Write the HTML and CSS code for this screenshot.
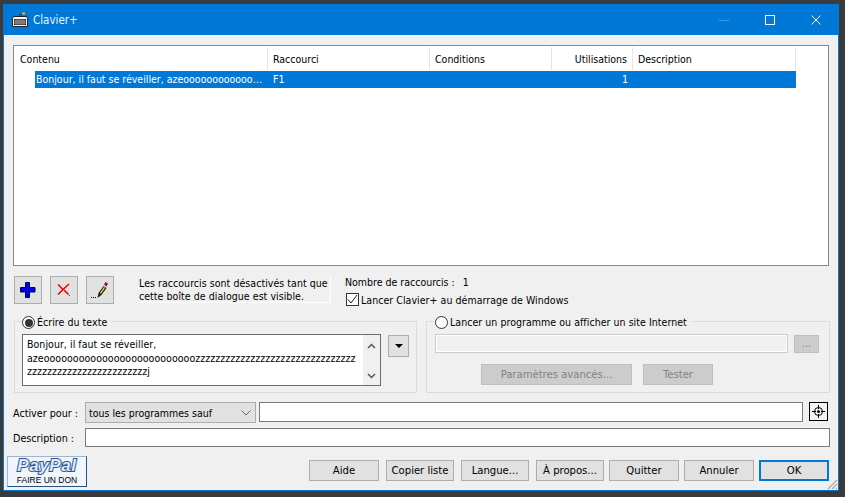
FILE: index.html
```html
<!DOCTYPE html>
<html lang="fr">
<head>
<meta charset="utf-8">
<title>Clavier+</title>
<link rel="stylesheet" href="styles.css">
</head>
<body>
<div class="window">
  <header class="titlebar">
    <svg class="app-icon" width="16" height="16" viewBox="0 0 16 16">
      <path d="M7.500 4V2.500h3" fill="none" stroke="#222" stroke-width="1" stroke-dasharray="1 .6"/>
      <rect x="10" y="0.500" width="3" height="2" fill="#e8b820"/>
      <path d="M1.500 4.500h13l1 2v8h-15v-8z" fill="#f4f4f4" stroke="#222" stroke-width="1"/>
      <rect x="2" y="7" width="12" height="6" fill="#111"/>
      <path d="M2 9h12M2 11h12M4 7v6M6 7v6M8 7v6M10 7v6M12 7v6" stroke="#e8e8e8" stroke-width=".6"/>
    </svg>
    <span class="title">Clavier+</span>
    <div class="caption">
      <span class="cap-btn"><svg width="10" height="10"><path d="M0 5.500h10" stroke="#3f9be6"/></svg></span>
      <span class="cap-btn"><svg width="10" height="10"><rect x=".5" y=".5" width="9" height="9" fill="none" stroke="#fff"/></svg></span>
      <span class="cap-btn"><svg width="10" height="10"><path d="M.5.500l9 9M9.500.500l-9 9" stroke="#fff"/></svg></span>
    </div>
  </header>

  <main class="content">
    <section class="listview">
      <div class="list-head">
        <div class="col c1 first-col">Contenu</div>
        <div class="col c2">Raccourci</div>
        <div class="col c3">Conditions</div>
        <div class="col c4 num">Utilisations</div>
        <div class="col c5">Description</div>
      </div>
      <div class="list-row">
        <div class="cell c1s">Bonjour, il faut se réveiller, azeoooooooooooo…</div>
        <div class="cell c2">F1</div>
        <div class="cell c3"></div>
        <div class="cell c4 num">1</div>
        <div class="cell c5"></div>
      </div>
    </section>

    <section class="tools">
      <button class="tool"><svg width="16" height="16" viewBox="0 0 16 16"><path d="M5.500.500h4v5h5.500v4.500H9.500v5.500h-4V10H.500V5.500h5z" fill="#0000e8" stroke="#000050"/></svg></button>
      <button class="tool"><svg width="14" height="14" viewBox="0 0 14 14"><path d="M1 1.500l5 5 6-5.500M6 6.500L1 11.500M7 7l4.500 4.500" fill="none" stroke="#f00000" stroke-width="1.600"/><rect x="12" y="12" width="1" height="1" fill="#f00000"/></svg></button>
      <button class="tool"><svg width="20" height="20" viewBox="0 0 20 20"><path d="M1 17.500h1M3 17.500h1M5 17.500h1" stroke="#000"/><path d="M7.500 18l1-5 5-7 3 2-5 7z" fill="#222"/><path d="M10 13l4-6 1 .8-4 6z" fill="#ffe820"/><path d="M14 4.500l1.500-2.500 2.500 1.500-1.500 3z" fill="#8a1c20"/></svg></button>
      <div class="notice">Les raccourcis sont désactivés tant que<br>cette boîte de dialogue est visible.</div>
      <div class="stats">
        <div class="count"><span>Nombre de raccourcis :</span><span class="count-value">1</span></div>
        <label class="check"><span class="checkbox"><svg width="11" height="11" viewBox="0 0 11 11"><path d="M1 5.500l3 3.500 6-8" fill="none" stroke="#222" stroke-width="1"/></svg></span>Lancer Clavier+ au démarrage de Windows</label>
      </div>
    </section>

    <section class="groups">
      <fieldset class="group left">
        <legend><span class="radio on"></span>Écrire du texte</legend>
        <div class="text-row">
          <div class="textarea">
            <div class="text-body">Bonjour, il faut se réveiller,<br>azeoooooooooooooooooooooooooozzzzzzzzzzzzzzzzzzzzzzzzzzzzzzzz<br>zzzzzzzzzzzzzzzzzzzzzzzzj</div>
            <div class="scroll">
              <svg width="9" height="6" viewBox="0 0 9 6"><path d="M1 5l3.500-3.500L8 5" fill="none" stroke="#555" stroke-width="1.500"/></svg>
              <svg width="9" height="6" viewBox="0 0 9 6"><path d="M1 1l3.500 3.500L8 1" fill="none" stroke="#555" stroke-width="1.500"/></svg>
            </div>
          </div>
          <button class="drop"><svg width="8" height="4" viewBox="0 0 8 4"><path d="M0 0h8L4 4z" fill="#000"/></svg></button>
        </div>
      </fieldset>
      <fieldset class="group right">
        <legend><span class="radio"></span>Lancer un programme ou afficher un site Internet</legend>
        <div class="prog-row">
          <div class="input disabled"></div>
          <button class="btn-off dots">...</button>
        </div>
        <div class="prog-actions">
          <button class="btn-off adv">Paramètres avancés...</button>
          <button class="btn-off test">Tester</button>
        </div>
      </fieldset>
    </section>

    <section class="form-row first">
      <label class="form-label">Activer pour :</label>
      <div class="select"><span>tous les programmes sauf</span><svg width="10" height="6" viewBox="0 0 10 6"><path d="M.5.500L5 5 9.500.500" fill="none" stroke="#666"/></svg></div>
      <div class="input grow"></div>
      <button class="target"><svg width="15" height="15" viewBox="0 0 15 15"><circle cx="7.500" cy="7.500" r="4" fill="none" stroke="#000"/><circle cx="7.500" cy="7.500" r="1.500" fill="#000"/><path d="M7.500 1v4M7.500 10v4M1 7.500h4M10 7.500h4" stroke="#000"/></svg></button>
    </section>
    <section class="form-row second">
      <label class="form-label">Description :</label>
      <div class="input grow"></div>
    </section>

    <footer class="footer">
      <button class="paypal"><span class="pp-logo">PayPal</span><span class="pp-text">FAIRE UN DON</span></button>
      <div class="actions">
        <button class="btn w70">Aide</button>
        <button class="btn w68">Copier liste</button>
        <button class="btn w68">Langue...</button>
        <button class="btn w68">À propos...</button>
        <button class="btn w70 tight">Quitter</button>
        <button class="btn w70 tight">Annuler</button>
        <button class="btn w70 tight default">OK</button>
      </div>
    </footer>
  </main>
  <svg class="grip" width="12" height="12" viewBox="0 0 12 12"><path d="M11 2L2 11M11 6L6 11M11 10L10 11" stroke="#a8a8a8" stroke-width="1.200"/></svg>
</div>
</body>
</html>
```

FILE: styles.css
```css
* { box-sizing: border-box; }
html, body { margin: 0; height: 100%; }
body {
  background: #3b3b3b;
  font-family: "DejaVu Sans", sans-serif;
  font-stretch: condensed;
  font-size: 10.5px;
  color: #000;
  overflow: hidden;
}
button { font: inherit; font-size: 11.2px; font-stretch: condensed; color: inherit; padding: 0; margin: 0; }

.window {
  position: relative;
  width: 836px;
  height: 487px;
  margin: 4px 0 0 3px;
  background: #f0f0f0;
  border: 1px solid #0078d7;
  border-top: 0;
  display: flex;
  flex-direction: column;
}

.titlebar {
  height: 31px;
  flex: none;
  background: #0078d7;
  display: flex;
  align-items: center;
  padding-left: 8px;
  color: #fff;
}
.app-icon { margin-right: 5px; }
.title { font-size: 11.5px; color: #e8f3fb; }
.caption { margin-left: auto; margin-right: -1px; display: flex; }
.cap-btn { width: 46px; display: flex; justify-content: center; align-items: center; height: 31px; }

.content { padding: 10px 8px 0 9px; flex: 1; display: flex; flex-direction: column; }

.listview {
  height: 221px;
  width: 816px;
  background: #fff;
  border: 1px solid #828790;
  flex: none;
}
.list-head { display: flex; height: 25px; }
.col {
  border-right: 1px solid #e5e5e5;
  padding: 6px 5px 0 5px;
  margin-top: 1px;
  height: 23px;
}
.first-col { padding-left: 6px; }
.list-row { display: flex; height: 17px; line-height: 17px; }
.cell { padding: 0 5px 0 5px; background: #0078d7; color: #fff; white-space: nowrap; overflow: hidden; }
.c1 { width: 254px; }
.c1s { width: 233px; margin-left: 21px; padding-left: 1px; padding-right: 0; text-overflow: ellipsis; }
.c2 { width: 162px; }
.c3 { width: 122px; }
.c4 { width: 81px; }
.c5 { width: 163px; }
.num { text-align: right; }

.tools { display: flex; height: 28px; margin-top: 10px; padding-left: 1px; flex: none; }
.tool {
  width: 28px;
  height: 28px;
  margin-right: 8px;
  background: #e1e1e1;
  border: 1px solid #adadad;
  display: flex;
  align-items: center;
  justify-content: center;
}
.notice {
  width: 193px;
  height: 28px;
  margin-left: 16px;
  margin-top: -1px;
  padding-top: 1px;
  border: 1px solid #fff;
  border-left-color: #f0f0f0;
  border-top-color: #f0f0f0;
  line-height: 13px;
  letter-spacing: .05px;
  white-space: nowrap;
}
.stats { margin-left: 14px; margin-top: -1px; }
.count { display: flex; height: 15px; line-height: 15px; }
.count-value { margin-left: 8px; }
.check { display: flex; align-items: center; height: 15px; margin-top: 2px; margin-left: 1px; letter-spacing: .05px; }
.checkbox {
  width: 13px;
  height: 13px;
  border: 1px solid #333;
  background: #fff;
  margin-right: 2px;
  display: flex;
  align-items: center;
  justify-content: center;
}

.groups { display: flex; gap: 9px; margin-top: 11px; padding-left: 1px; height: 78px; flex: none; }
.group {
  margin: 0;
  min-width: 0;
  height: 78px;
  border: 1px solid #dcdcdc;
  padding: 0 0 0 7px;
}
.group.left { width: 403px; }
.group.right { width: 404px; padding-left: 8px; }
legend {
  padding: 0 5px 0 0;
  display: flex;
  align-items: center;
  height: 13px;
  line-height: 13px;
  position: relative;
  top: 1px;
  letter-spacing: .05px;
}
.radio {
  width: 13px;
  height: 13px;
  border: 1px solid #333;
  border-radius: 50%;
  background: #fff;
  margin-right: 2px;
  display: inline-flex;
  align-items: center;
  justify-content: center;
  flex: none;
}
.radio.on::after { content: ""; width: 8px; height: 8px; border-radius: 50%; background: #333; }

.text-row { display: flex; margin-top: 6px; }
.textarea {
  width: 359px;
  height: 52px;
  background: #fff;
  border: 1px solid #6e6e6e;
  display: flex;
}
.text-body { flex: 1; padding: 3px 0 0 4px; line-height: 13.5px; letter-spacing: .05px; white-space: nowrap; overflow: hidden; }
.scroll {
  width: 17px;
  background: #f0f0f0;
  display: flex;
  flex-direction: column;
  justify-content: space-between;
  align-items: center;
  padding: 8px 0 6px;
  flex: none;
}
.drop {
  width: 21px;
  height: 22px;
  margin: 1px 0 0 7px;
  background: #e1e1e1;
  border: 1px solid #adadad;
  display: flex;
  align-items: center;
  justify-content: center;
}

.prog-row { display: flex; margin-top: 6px; }
.input { background: #fff; border: 1px solid #7a7a7a; height: 20px; }
.input.disabled { width: 353px; height: 19px; background: #f0f0f0; border: 1px solid #ccc; box-shadow: inset 0 0 0 1px #fff; flex: none; }
.btn-off {
  background: #ccc;
  border: 1px solid #bfbfbf;
  color: #838383;
  height: 21px;
}
.dots { width: 25px; height: 18px; margin: 1px 0 0 6px; line-height: 12px; }
.prog-actions { display: flex; margin-top: 11px; padding-left: 46px; gap: 11px; }
.adv { width: 151px; }
.test { width: 70px; }

.form-row { display: flex; align-items: flex-start; flex: none; }
.form-row.first { margin-top: 9px; height: 21px; }
.form-row.second { margin-top: 5px; height: 19px; }
.form-label { width: 72px; flex: none; line-height: 23px; font-size: 10.7px; }
.second .form-label { line-height: 21px; }
.second .input { height: 19px; }
.select {
  width: 171px;
  height: 21px;
  background: #e1e1e1;
  border: 1px solid #adadad;
  display: flex;
  align-items: center;
  justify-content: space-between;
  padding: 0 4px 0 3px;
  flex: none;
}
.grow { flex: 1; }
.first .grow { margin-left: 3px; }
.target {
  width: 19px;
  height: 19px;
  margin: 0 2px 0 6px;
  background: #f4f4f4;
  border: 1px solid #000;
  display: flex;
  align-items: center;
  justify-content: center;
  flex: none;
}

.footer { display: flex; margin-top: 9px; margin-left: -6px; align-items: flex-start; }
.paypal {
  width: 80px;
  height: 31px;
  background: #f0f6fb;
  border: 1px solid #28527f;
  border-top-color: #9db4cc;
  border-left-color: #9db4cc;
  display: flex;
  flex-direction: column;
  align-items: center;
  flex: none;
}
.pp-logo {
  font: italic bold 17px/18px "Liberation Sans", sans-serif;
  color: #dfe9f7;
  -webkit-text-stroke: 2px #2a5594;
  paint-order: stroke fill;
  letter-spacing: .6px;
}
.pp-text { font: 8.5px/10px "Liberation Sans", sans-serif; color: #000; }
.actions { margin-left: auto; display: flex; margin-top: 4px; gap: 7px; padding-right: 1px; }
.btn { height: 21px; background: #e1e1e1; border: 1px solid #adadad; }
.w70 { width: 70px; }
.w68 { width: 68px; }
.tight { margin-left: -2px; }
.default { border: 2px solid #0078d7; }

.grip { position: absolute; right: 0; bottom: 0; }
```
